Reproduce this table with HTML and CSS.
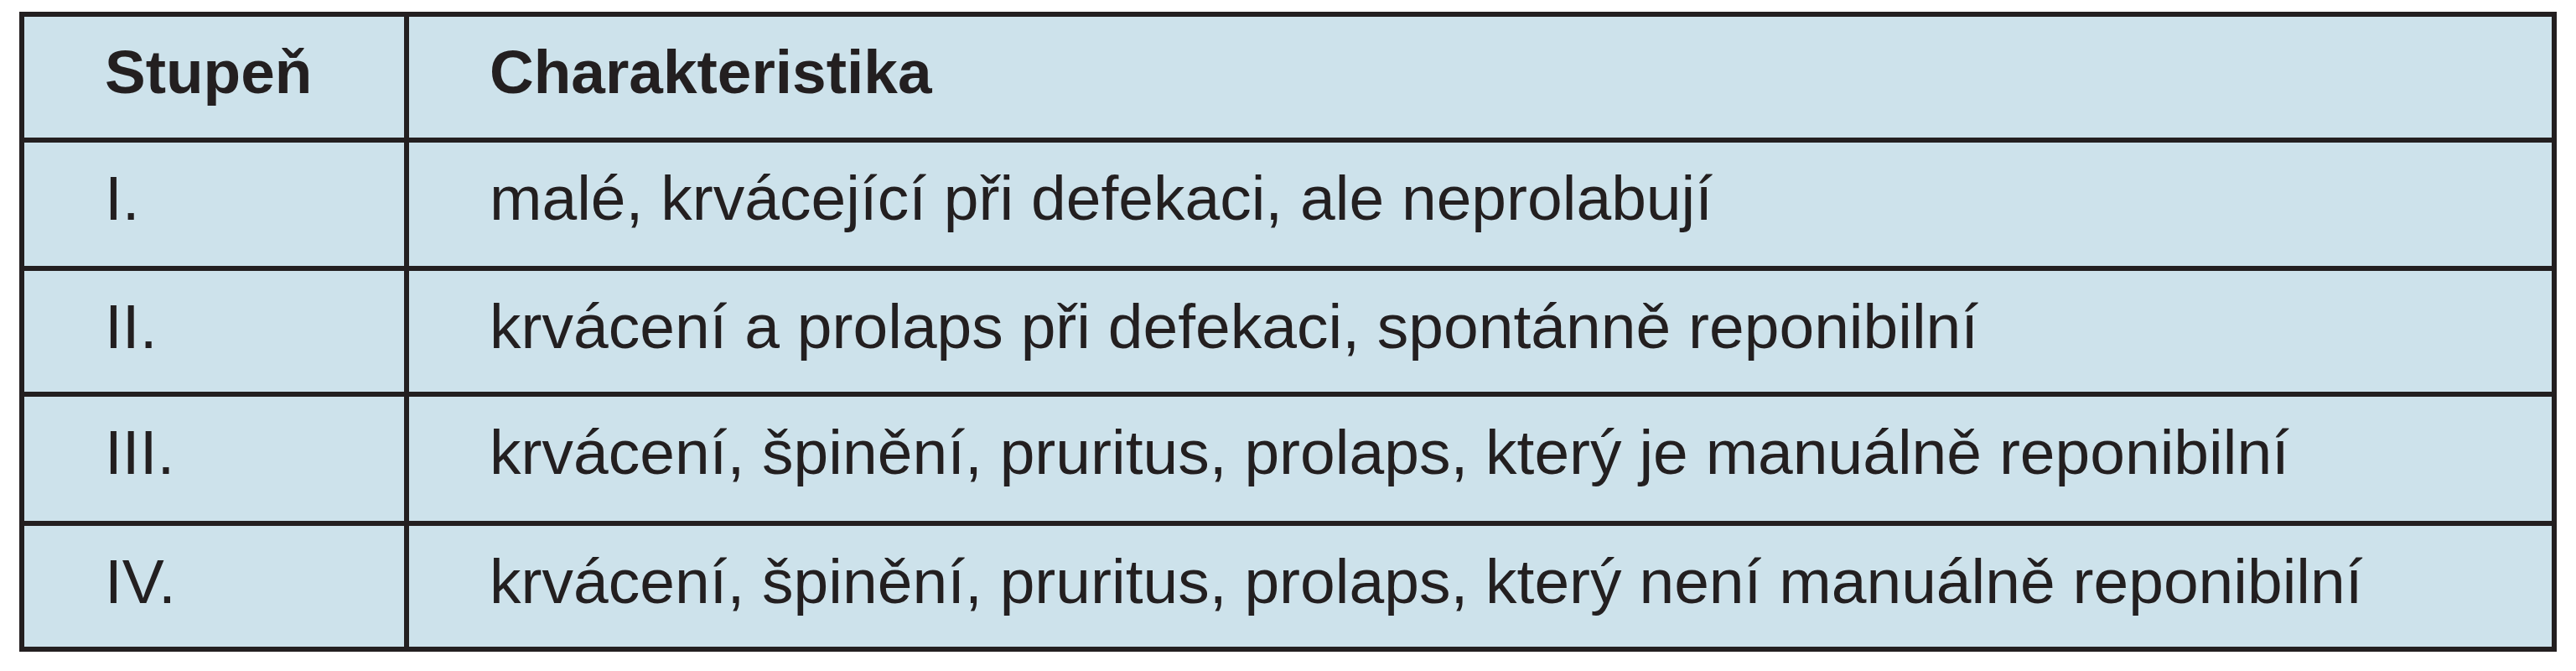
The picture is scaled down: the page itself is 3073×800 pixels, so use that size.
FILE: index.html
```html
<!DOCTYPE html>
<html lang="cs">
<head>
<meta charset="utf-8">
<title>Stupně</title>
<link rel="stylesheet" href="styles.css">
</head>
<body>
<table class="grades">
  <thead>
    <tr class="row-head">
      <th class="col-grade">Stupeň</th>
      <th class="col-desc">Charakteristika</th>
    </tr>
  </thead>
  <tbody>
    <tr class="row-1">
      <td class="col-grade">I.</td>
      <td class="col-desc">malé, krvácející při defekaci, ale neprolabují</td>
    </tr>
    <tr class="row-2">
      <td class="col-grade">II.</td>
      <td class="col-desc">krvácení a prolaps při defekaci, spontánně reponibilní</td>
    </tr>
    <tr class="row-3">
      <td class="col-grade">III.</td>
      <td class="col-desc">krvácení, špinění, pruritus, prolaps, který je manuálně reponibilní</td>
    </tr>
    <tr class="row-4">
      <td class="col-grade">IV.</td>
      <td class="col-desc">krvácení, špinění, pruritus, prolaps, který není manuálně reponibilní</td>
    </tr>
  </tbody>
</table>
</body>
</html>
```
FILE: styles.css
```css
html, body {
  margin: 0;
  padding: 0;
  background: #ffffff;
}

body {
  padding: 14px 0 0 23px;
}

.grades {
  border-collapse: separate;
  border-spacing: 0;
  width: 3027px;
  border-top: 6px solid #231f20;
  border-left: 6px solid #231f20;
  background: #cde2eb;
  color: #231f20;
  font-family: "Liberation Sans", Arial, sans-serif;
  table-layout: fixed;
}

.grades th,
.grades td {
  box-sizing: border-box;
  border-right: 6px solid #231f20;
  border-bottom: 6px solid #231f20;
  padding: 16px 0 0 96px;
  vertical-align: top;
  text-align: left;
  white-space: nowrap;
  line-height: 100px;
}

.grades th {
  font-size: 73px;
  font-weight: 700;
}

.grades td {
  font-size: 75px;
  font-weight: 400;
}

.col-grade {
  width: 459px;
}

.row-head th { height: 150px; }
.row-1 td { height: 153px; }
.row-2 td { height: 150px; }
.row-3 td { height: 154px; }
.row-4 td { height: 150px; }
```
